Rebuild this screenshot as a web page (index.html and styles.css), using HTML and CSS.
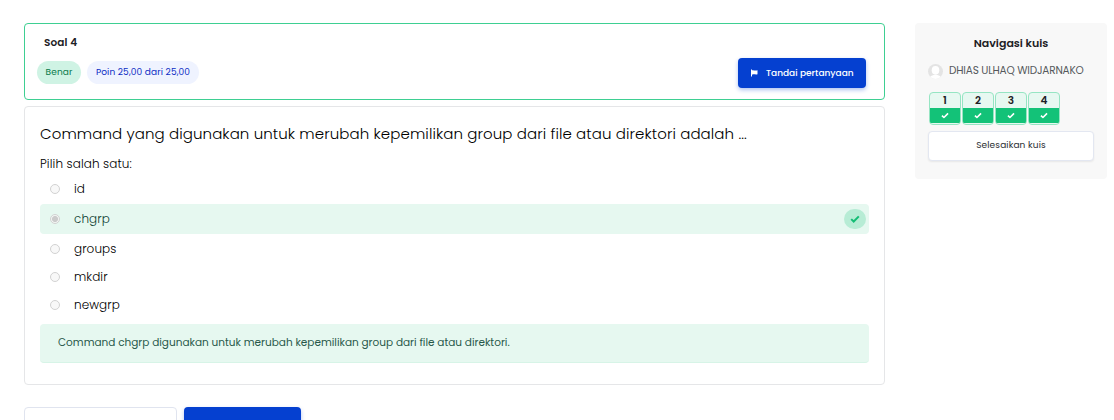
FILE: index.html
```html
<!DOCTYPE html>
<html lang="id">
<head>
<meta charset="utf-8">
<title>Kuis</title>
<link rel="stylesheet" href="styles.css">
</head>
<body>
<svg class="defs" width="0" height="0"><symbol id="check" viewBox="0 0 10 8"><path d="M1.2 4.1 3.700 6.500 8.800 1.400" fill="none" stroke="currentColor" stroke-width="2"/></symbol></svg>
<div class="page">
  <main class="main">
    <section class="info">
      <h3 class="info-title">Soal 4</h3>
      <div class="info-row">
        <span class="pill pill-ok">Benar</span>
        <span class="pill pill-points">Poin 25,00 dari 25,00</span>
        <button class="flag">
          <svg width="7" height="8" viewBox="0 0 7 8"><path d="M.5.5v7" stroke="#fff"/><path d="M1 1.300C2.700.7 3.600 2 6.500 1.300v4C4.200 6 3.200 4.700 1 5.700z" fill="#fff"/></svg>
          <span>Tandai pertanyaan</span>
        </button>
      </div>
    </section>
    <section class="question">
      <p class="prompt">Command yang digunakan untuk merubah kepemilikan group dari file atau direktori adalah ...</p>
      <p class="choose">Pilih salah satu:</p>
      <div class="option"><i class="radio"></i><span class="label">id</span></div>
      <div class="option correct"><i class="radio checked"></i><span class="label">chgrp</span><span class="mark"><svg width="10" height="8"><use href="#check"/></svg></span></div>
      <div class="option"><i class="radio"></i><span class="label">groups</span></div>
      <div class="option"><i class="radio"></i><span class="label">mkdir</span></div>
      <div class="option"><i class="radio"></i><span class="label">newgrp</span></div>
      <div class="feedback">Command chgrp digunakan untuk merubah kepemilikan group dari file atau direktori.</div>
    </section>
    <div class="actions"><div class="jump"></div><div class="next"></div></div>
  </main>
  <aside class="nav">
    <h2 class="nav-title">Navigasi kuis</h2>
    <div class="user">
      <svg width="15" height="15" viewBox="0 0 15 15"><defs><clipPath id="disc"><circle cx="7.500" cy="7.500" r="7.500"/></clipPath></defs><g clip-path="url(#disc)"><path d="M0 0h15v15H0z" fill="#e4e4e4"/><ellipse cx="7.500" cy="6.300" rx="3.800" ry="4.300" fill="#fff"/><path d="M1.500 15c0-3 2.500-3.600 6-4.500 3.500.9 6 1.500 6 4.500z" fill="#fff"/></g></svg>
      <span>DHIAS ULHAQ WIDJARNAKO</span>
    </div>
    <div class="numbers">
      <div class="num"><b>1</b><span><svg width="8" height="7" viewBox="0 0 10 8"><use href="#check" width="10" height="8"/></svg></span></div>
      <div class="num"><b>2</b><span><svg width="8" height="7" viewBox="0 0 10 8"><use href="#check" width="10" height="8"/></svg></span></div>
      <div class="num"><b>3</b><span><svg width="8" height="7" viewBox="0 0 10 8"><use href="#check" width="10" height="8"/></svg></span></div>
      <div class="num"><b>4</b><span><svg width="8" height="7" viewBox="0 0 10 8"><use href="#check" width="10" height="8"/></svg></span></div>
    </div>
    <button class="finish">Selesaikan kuis</button>
  </aside>
</div>
</body>
</html>
```
FILE: styles.css
```css
* { box-sizing: border-box; }
body { margin: 0; height: 420px; overflow: hidden; background: #fff; color: #1d2125; font-family: Poppins, Inter, "Open Sans", sans-serif; }
h2, h3, p { margin: 0; }
button { font: inherit; border: 0; padding: 0; }
span, p { white-space: nowrap; }
.defs { display: block; }
.page { display: flex; align-items: flex-start; gap: 30px; padding: 23px 7px 0 24px; }
.main { width: 861px; }
.info { height: 77px; border: 1px solid #3ecf92; border-radius: 4px; padding: 11px 18px 0 12px; }
.info-title { padding-left: 7px; font-size: 10.5px; line-height: 15px; font-weight: 600; letter-spacing: .1px; }
.info-row { display: flex; align-items: flex-start; margin-top: 8px; }
.pill { height: 23px; margin-top: 3px; border-radius: 12px; display: flex; align-items: center; justify-content: center; font-size: 9px; letter-spacing: .12px; }
.pill-ok { width: 44px; background: #cff3e4; color: #087a4a; }
.pill-points { width: 112px; margin-left: 6px; background: #eff3ff; color: #0c2cc4; }
.flag { width: 128px; height: 30px; margin-left: auto; padding-left: 13px; display: flex; align-items: center; gap: 8px; border-radius: 4px; background: #0540d0; color: #fff; font-size: 9px; font-weight: 500; box-shadow: 0 2px 4px rgba(5, 64, 208, .32); }
.question { height: 279px; margin-top: 6px; border: 1px solid #e5e6e8; border-radius: 4px; padding: 15px; }
.prompt { color: #000; font-size: 15px; line-height: 24px; font-weight: 300; letter-spacing: .095px; }
.choose { color: #000; margin-top: 9px; font-size: 12px; line-height: 18px; font-weight: 300; letter-spacing: .1px; }
.option { color: #000; display: flex; align-items: center; height: 28px; padding: 0 3px 0 10px; font-size: 12px; font-weight: 300; letter-spacing: .08px; }
.choose + .option { height: 30px; margin-top: 1px; }
.correct { height: 30px; margin-bottom: 1px; border-radius: 4px; background: #e6f8f0; color: #0f4232; }
.radio { width: 10px; height: 10px; margin-right: 14px; border: 1px solid #d2d2d2; border-radius: 50%; background: #f8f8f8; }
.checked { background: radial-gradient(circle, #cbcbcb 0 2.7px, #f3f6f4 3.3px); }
.mark { width: 22px; height: 20px; margin-left: auto; border-radius: 10px; background: #b7ecd5; color: #14bd75; display: flex; align-items: center; justify-content: center; }
.feedback { height: 39px; margin-top: 5px; padding: 10px 18px; border-radius: 4px; background: #e6f8f0; border-bottom: 1px solid #d7f4e7; color: #28594a; font-size: 10.5px; line-height: 17px; }
.actions { display: flex; gap: 7px; margin-top: 22px; }
.jump { width: 153px; height: 30px; border: 1px solid #e0e4ef; border-radius: 4px; }
.next { width: 117px; height: 30px; border-radius: 4px; background: #0540d0; box-shadow: 0 2px 4px rgba(5, 64, 208, .3); }
.nav { width: 192px; height: 156px; border-radius: 4px; background: #f8f8f8; padding: 12px 13px 0; }
.nav-title { font-size: 11px; line-height: 16px; font-weight: 600; text-align: center; }
.user { display: flex; align-items: center; gap: 6px; height: 15px; margin-top: 13px; color: #55585c; font-size: 10.5px; letter-spacing: -.18px; }
.user span { margin-top: -2px; }
.numbers { display: flex; gap: 1px; margin: 13px 0 0 1px; }
.num { width: 32px; height: 33px; border: 1px solid #96e5c3; border-radius: 4px; background: #e7f8f1; overflow: hidden; display: flex; flex-direction: column; }
.num b { height: 15px; font-size: 10.5px; line-height: 15px; font-weight: 600; text-align: center; }
.num span { height: 15px; display: flex; align-items: center; justify-content: center; background: #13c278; color: #fff; }
.finish { width: 166px; height: 30px; margin-top: 6px; padding-bottom: 2px; border: 1px solid #e3e7f1; border-radius: 4px; background: #fff; color: #2a2d31; font-size: 9px; letter-spacing: .12px; box-shadow: 0 1px 2px rgba(0, 0, 0, .07); }
```
